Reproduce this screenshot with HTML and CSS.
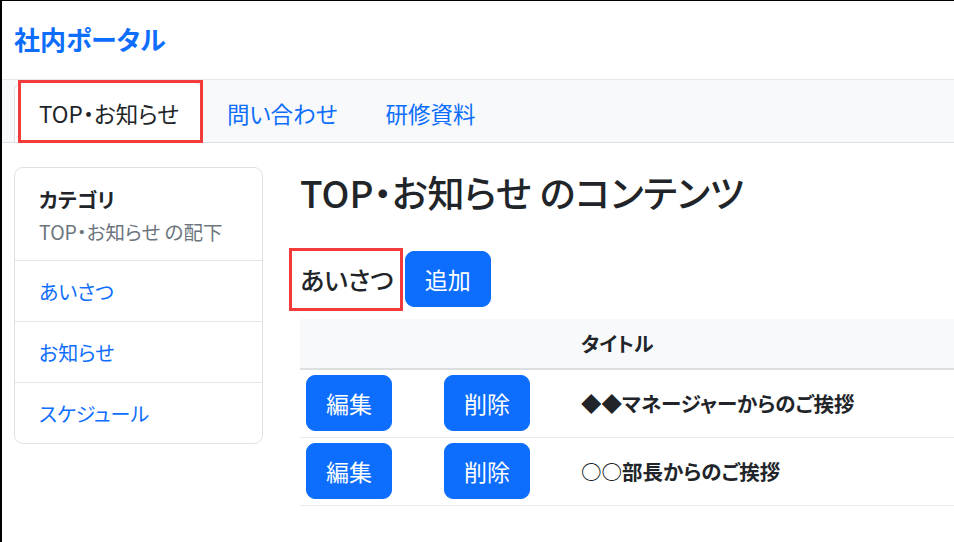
FILE: index.html
```html
<!DOCTYPE html>
<html lang="ja">
<head>
<meta charset="utf-8">
<title>社内ポータル</title>
<link rel="stylesheet" href="styles.css">
</head>
<body>
<header class="topbar">
  <a class="brand" href="#">社内ポータル</a>
</header>
<nav class="tabs">
  <ul class="tab-list">
    <li class="tab tab-active marked"><span>TOP・お知らせ</span></li>
    <li class="tab"><a href="#">問い合わせ</a></li>
    <li class="tab"><a href="#">研修資料</a></li>
  </ul>
</nav>
<div class="layout">
  <aside class="side-card">
    <div class="side-head">
      <div class="side-title">カテゴリ</div>
      <div class="side-sub">TOP・お知らせ の配下</div>
    </div>
    <a class="side-item" href="#">あいさつ</a>
    <a class="side-item" href="#">お知らせ</a>
    <a class="side-item" href="#">スケジュール</a>
  </aside>
  <main class="main">
    <h1 class="page-title">TOP・お知らせ のコンテンツ</h1>
    <div class="section-head">
      <h2 class="section-title marked-title">あいさつ</h2>
      <button class="btn">追加</button>
    </div>
    <table class="content-table">
      <thead>
        <tr><th class="col-btn1"></th><th class="col-btn2"></th><th>タイトル</th></tr>
      </thead>
      <tbody>
        <tr>
          <td><button class="btn">編集</button></td>
          <td><button class="btn">削除</button></td>
          <td class="title-cell">◆◆マネージャーからのご挨拶</td>
        </tr>
        <tr>
          <td><button class="btn">編集</button></td>
          <td><button class="btn">削除</button></td>
          <td class="title-cell">○○部長からのご挨拶</td>
        </tr>
      </tbody>
    </table>
  </main>
</div>
</body>
</html>
```
FILE: styles.css
```css
* { box-sizing: border-box; }
html, body { margin: 0; padding: 0; }
body {
  font-family: "Noto Sans CJK JP", "Noto Sans", sans-serif;
  font-feature-settings: "palt";
  font-size: 22px;
  color: #212529;
  background: #fff;
  border-top: 1px solid #000;
  border-left: 2px solid #000;
  min-height: 542px;
  overflow: hidden;
}
a { text-decoration: none; color: #0d6efd; }

.topbar {
  height: 78px;
  display: flex;
  align-items: center;
  padding-left: 12px;
}
.brand {
  font-size: 26px;
  font-weight: 700;
  color: #0d6efd;
  line-height: 1;
  padding-bottom: 2px;
}

.tabs {
  background: #f8f9fa;
  border-top: 1px solid #e6e8eb;
  border-bottom: 1px solid #dee2e6;
  height: 64px;
}
.tab-list {
  list-style: none;
  margin: 0;
  padding: 0 0 0 12px;
  display: flex;
  align-items: flex-end;
  height: 62px;
}
.tab {
  height: 60px;
  padding: 0 23px;
  display: flex;
  align-items: center;
  font-size: 22.5px;
  border: 1px solid transparent;
  border-bottom: none;
  border-radius: 9px 9px 0 0;
}
.tab:first-child { padding-left: 24px; }
.tab a { color: #0d6efd; }
.tab-active {
  background: #fff;
  border-color: #dee2e6;
  color: #212529;
}
.marked { position: relative; }
.marked::after {
  content: "";
  position: absolute;
  left: 3px;
  top: -3px;
  right: -1px;
  bottom: -1px;
  border: 3px solid #f43b3b;
}

.layout {
  display: flex;
  align-items: flex-start;
  gap: 37px;
  padding: 24px 0 0 12px;
}
.side-card {
  width: 249px;
  flex: none;
  border: 1px solid #dee2e6;
  border-radius: 9px;
  display: flex;
  flex-direction: column;
}
.side-head {
  padding: 16px 24px 0;
  height: 93px;
  border-bottom: 1px solid #e3e5e8;
}
.side-title {
  font-weight: 700;
  font-size: 20.5px;
  line-height: 30px;
}
.side-sub {
  color: #6c757d;
  font-size: 19.5px;
  line-height: 32px;
  margin-top: 2px;
}
.side-item {
  height: 61px;
  padding: 0 24px;
  display: flex;
  align-items: center;
  font-size: 20px;
  color: #0d6efd;
  border-bottom: 1px solid #e3e5e8;
}
.side-item:last-child { border-bottom: none; height: 60px; }

.main {
  flex: 1;
  min-width: 0;
}
.page-title {
  margin: 0 0 34px;
  font-size: 37px;
  font-weight: 500;
  line-height: 50px;
}
.section-head {
  display: flex;
  align-items: center;
  height: 56px;
  margin-bottom: 12px;
}
.section-title {
  margin: 0;
  font-size: 25px;
  font-weight: 500;
  line-height: 36px;
}
.marked-title { position: relative; }
.marked-title::after {
  content: "";
  position: absolute;
  left: -11px;
  top: -13px;
  right: -9px;
  bottom: -14px;
  border: 3px solid #f43b3b;
}
.btn {
  font-family: inherit;
  font-feature-settings: "palt";
  font-size: 23px;
  line-height: 36px;
  padding: 9px 19px;
  color: #fff;
  background: #0d6efd;
  border: 1px solid #0d6efd;
  border-radius: 9px;
  cursor: pointer;
}
.section-head .btn { margin-left: 11px; }

.content-table {
  width: 100%;
  border-collapse: collapse;
}
.content-table th {
  background: #f8f9fa;
  text-align: left;
  font-weight: 700;
  font-size: 20px;
  height: 50px;
  padding: 0 6px;
  border-bottom: 2px solid #dcdfe2;
}
.content-table .col-btn1 { width: 138px; }
.content-table .col-btn2 { width: 137px; }
.content-table td {
  padding: 5px 6px 6px;
  border-bottom: 1px solid #e9ecef;
}
.title-cell { font-weight: 700; font-size: 20.5px; }
```
